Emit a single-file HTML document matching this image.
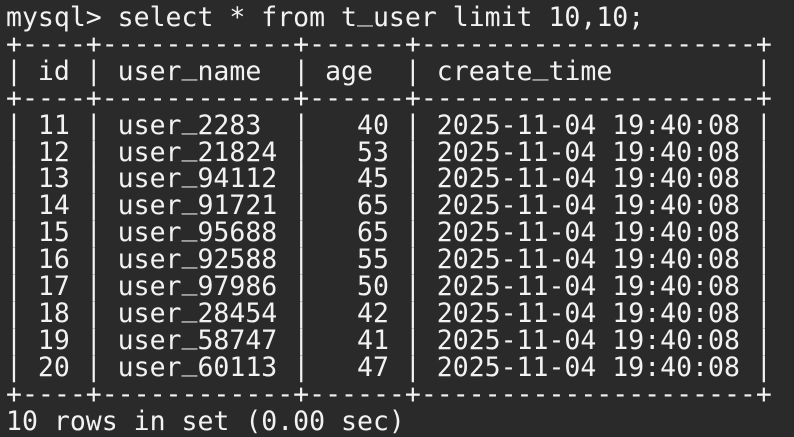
<!DOCTYPE html>
<html><head><style>
html,body{margin:0;padding:0;background:#2a2a2a;width:794px;height:434px;overflow:hidden}
pre{margin:0;position:absolute;left:6px;top:5px;color:#f2f2f2;font-family:"DejaVu Sans Mono","Liberation Mono",monospace;font-size:26.5px;line-height:26.9px;letter-spacing:0}
u{text-decoration:none;position:relative;top:-6px}
</style></head><body><pre>mysql&gt; select * from t<u>_</u>user limit 10,10;
+----+------------+------+---------------------+
| id | user<u>_</u>name  | age  | create<u>_</u>time         |
+----+------------+------+---------------------+
| 11 | user<u>_</u>2283  |   40 | 2025-11-04 19:40:08 |
| 12 | user<u>_</u>21824 |   53 | 2025-11-04 19:40:08 |
| 13 | user<u>_</u>94112 |   45 | 2025-11-04 19:40:08 |
| 14 | user<u>_</u>91721 |   65 | 2025-11-04 19:40:08 |
| 15 | user<u>_</u>95688 |   65 | 2025-11-04 19:40:08 |
| 16 | user<u>_</u>92588 |   55 | 2025-11-04 19:40:08 |
| 17 | user<u>_</u>97986 |   50 | 2025-11-04 19:40:08 |
| 18 | user<u>_</u>28454 |   42 | 2025-11-04 19:40:08 |
| 19 | user<u>_</u>58747 |   41 | 2025-11-04 19:40:08 |
| 20 | user<u>_</u>60113 |   47 | 2025-11-04 19:40:08 |
+----+------------+------+---------------------+
10 rows in set (0.00 sec)</pre></body></html>
